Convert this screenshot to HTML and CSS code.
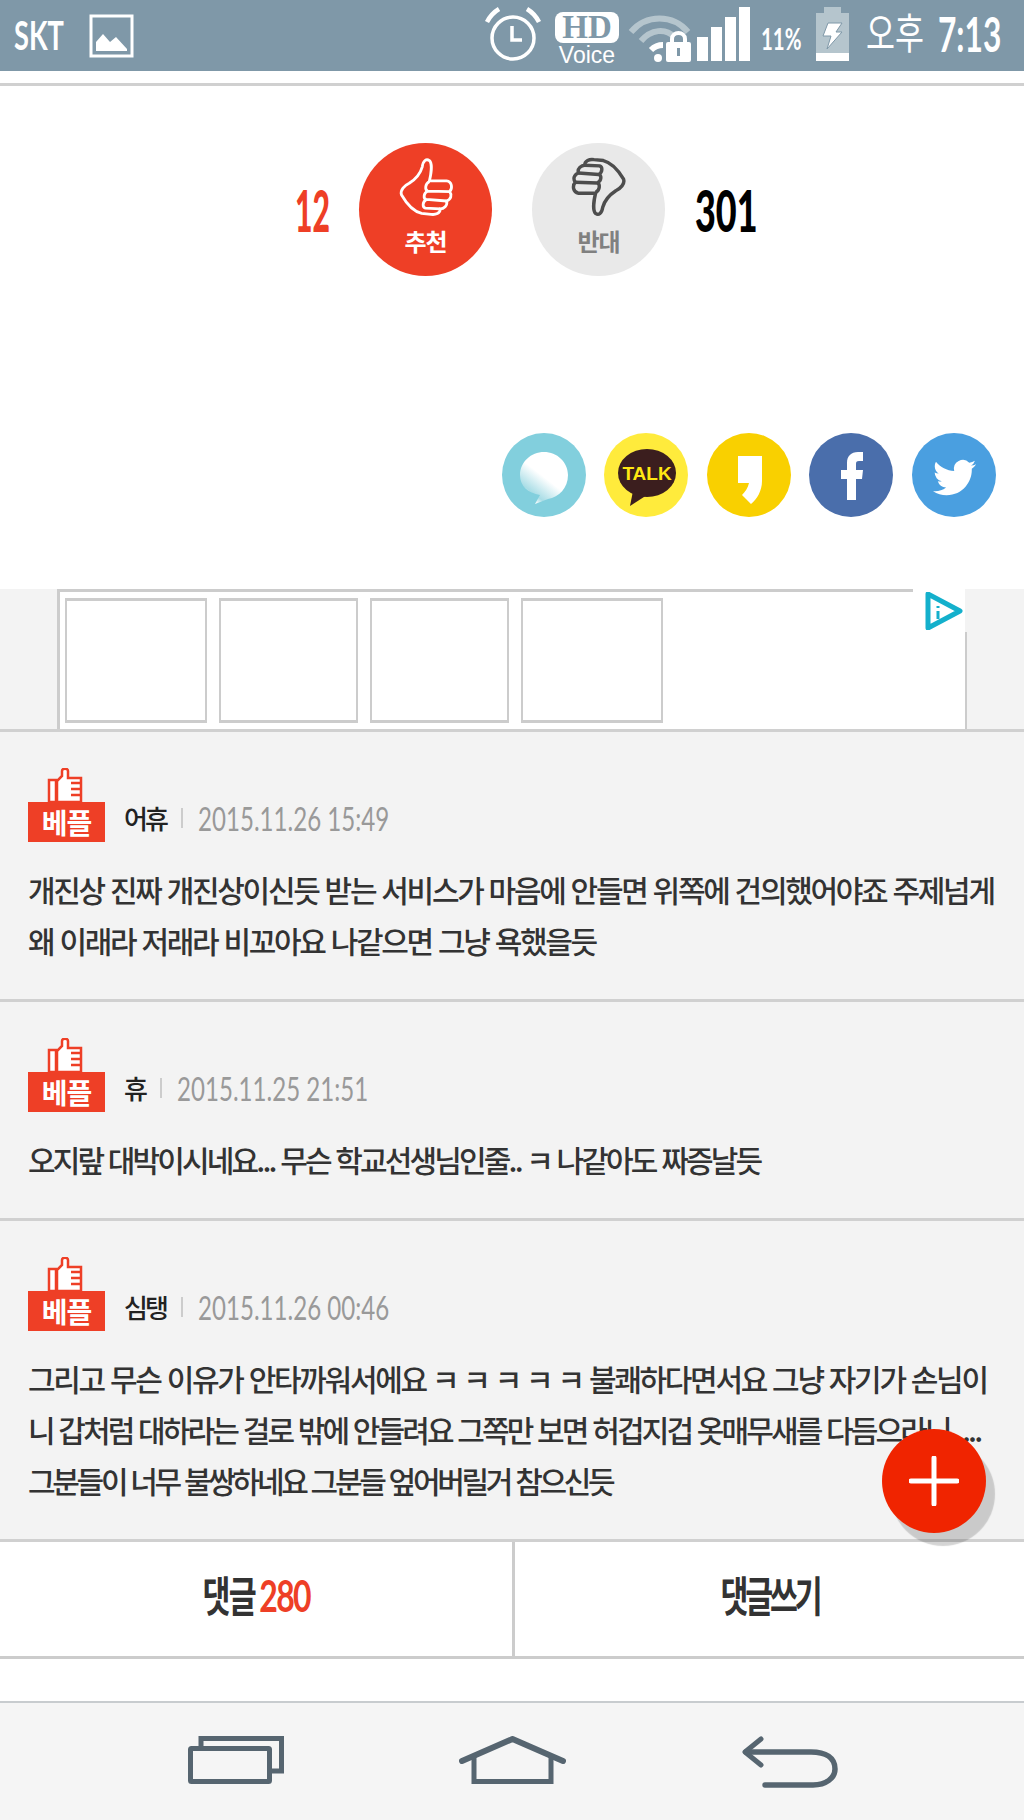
FILE: index.html
```html
<!DOCTYPE html>
<html lang="ko">
<head>
    <meta charset="UTF-8">
    <meta name="viewport" content="width=device-width, initial-scale=1.0">
    <title>댓글</title>
    <link rel="stylesheet" href="styles.css">
</head>
<body>
<div class="page">
    <!-- status bar -->
    <div class="status-bar">
        <div class="status-left">
            <span class="carrier"><span class="squeeze">SKT</span></span>
            <svg class="gallery-icon" width="45" height="44" viewBox="0 0 45 44">
                <rect x="2" y="2" width="41" height="40" fill="none" stroke="#fff" stroke-width="3"/>
                <path d="M7 37V28L14 20L21 28L27 23L38 35V37Z" fill="#fff"/>
            </svg>
        </div>
        <div class="status-right">
            <svg class="alarm-icon" width="58" height="54" viewBox="0 0 58 54">
                <circle cx="29" cy="31" r="21" fill="none" stroke="#fff" stroke-width="3.5"/>
                <path d="M28 19V33H38" fill="none" stroke="#fff" stroke-width="3.5"/>
                <path d="M3 15C6 9 10 5 15 2M55 15C52 9 48 5 43 2" fill="none" stroke="#fff" stroke-width="4.5"/>
            </svg>
            <div class="hd-voice">
                <span class="hd">HD</span>
                <span class="voice">Voice</span>
            </div>
            <svg class="wifi-icon" width="63" height="48" viewBox="0 0 63 48">
                <path d="M3 17C18 -1 45 -1 60 17" fill="none" stroke="#b5c5cd" stroke-width="6"/>
                <path d="M13 26C23 14 38 13 46 22" fill="none" stroke="#b5c5cd" stroke-width="6"/>
                <path d="M23 35C27 31 31 30 35 30" fill="none" stroke="#fff" stroke-width="6"/>
                <circle cx="30" cy="43" r="4" fill="#fff"/>
                <rect x="38" y="27" width="25" height="20" rx="2" fill="#fff"/>
                <path d="M44 28V24C44 16 57 16 57 24V28" fill="none" stroke="#fff" stroke-width="4"/>
                <rect x="49" y="33" width="3" height="8" fill="#7f98a8"/>
            </svg>
            <div class="signal">
                <span class="bar bar-1"></span>
                <span class="bar bar-2"></span>
                <span class="bar bar-3"></span>
                <span class="bar bar-4"></span>
            </div>
            <span class="percent"><span class="squeeze">11%</span></span>
            <svg class="battery-icon" width="33" height="54" viewBox="0 0 33 54">
                <rect x="8" y="0" width="17" height="6" fill="#b5c5cd"/>
                <rect x="0" y="6" width="33" height="40" fill="#b5c5cd"/>
                <rect x="0" y="46" width="33" height="8" fill="#fff"/>
                <path d="M12 16H26L20 25H26L11 42L15 29H7Z" fill="#fff" stroke="#7f98a8" stroke-width="1"/>
            </svg>
            <span class="ampm"><span class="squeeze">오후</span></span>
            <span class="clock"><span class="squeeze">7:13</span></span>
        </div>
    </div>

    <div class="top-panel">
        <!-- vote -->
        <div class="vote-row">
            <span class="vote-count count-up"><span class="squeeze">12</span></span>
            <div class="vote-btn vote-up">
                <svg width="56" height="60" viewBox="-6 -6 180 192">
                    <path d="M5 115C0 100 15 85 30 78C50 65 65 50 72 25C75 5 85 -2 95 5C105 15 100 50 95 70L150 70C168 72 170 95 160 105C168 115 165 130 150 135C155 150 140 160 130 160C130 175 115 180 100 178L70 175C50 170 25 150 5 115Z" fill="none" stroke="#fff" stroke-width="9"/>
                    <path d="M95 72C80 80 80 100 90 103L160 105M90 103C75 110 75 128 85 130L150 135M85 130C72 138 72 155 82 158L130 160" fill="none" stroke="#fff" stroke-width="9"/>
                </svg>
                <span class="vote-label">추천</span>
            </div>
            <div class="vote-btn vote-down">
                <svg width="56" height="60" viewBox="-6 -6 180 192">
                    <g transform="rotate(180 84 90)">
                        <path d="M5 115C0 100 15 85 30 78C50 65 65 50 72 25C75 5 85 -2 95 5C105 15 100 50 95 70L150 70C168 72 170 95 160 105C168 115 165 130 150 135C155 150 140 160 130 160C130 175 115 180 100 178L70 175C50 170 25 150 5 115Z" fill="none" stroke="#4d4d4d" stroke-width="11"/>
                        <path d="M95 72C80 80 80 100 90 103L160 105M90 103C75 110 75 128 85 130L150 135M85 130C72 138 72 155 82 158L130 160" fill="none" stroke="#4d4d4d" stroke-width="11"/>
                    </g>
                </svg>
                <span class="vote-label">반대</span>
            </div>
            <span class="vote-count count-down"><span class="squeeze">301</span></span>
        </div>

        <!-- share -->
        <div class="share-row">
            <svg width="84" height="84" viewBox="0 0 84 84">
                <defs>
                    <linearGradient id="bubbleFade" x1="0.7" y1="0.2" x2="0.2" y2="0.9">
                        <stop offset="0.4" stop-color="#fff"/>
                        <stop offset="0.85" stop-color="#a9dde6"/>
                        <stop offset="1" stop-color="#fff"/>
                    </linearGradient>
                </defs>
                <circle cx="42" cy="42" r="42" fill="#82cfdd"/>
                <path d="M42 19C55 19 66 29 66 42C66 55 57 64 46 66L33 71L38 62C26 60 18 53 18 42C18 29 29 19 42 19Z" fill="url(#bubbleFade)"/>
            </svg>
            <svg width="84" height="84" viewBox="0 0 84 84">
                <circle cx="42" cy="42" r="42" fill="#ffeb3c"/>
                <ellipse cx="43" cy="40" rx="29" ry="24" fill="#3b1e1e"/>
                <path d="M29 58L26 73L43 62Z" fill="#3b1e1e"/>
                <text x="43" y="47" class="talk-text">TALK</text>
            </svg>
            <svg width="84" height="84" viewBox="0 0 84 84">
                <circle cx="42" cy="42" r="42" fill="#f9d000"/>
                <path d="M31 23H55V48C55 58 50 66 44 71L35 62C38 59 41 55 42 50H31Z" fill="#fff"/>
            </svg>
            <svg width="84" height="84" viewBox="0 0 84 84">
                <circle cx="42" cy="42" r="42" fill="#4a6eab"/>
                <path d="M38 67V46H32V37H38V30C38 23 42 19 49 19H54V28H50C47.5 28 47 29 47 31V37H54L53 46H47V67Z" fill="#fff"/>
            </svg>
            <svg width="84" height="84" viewBox="0 0 84 84">
                <circle cx="42" cy="42" r="42" fill="#4a9fe0"/>
                <path transform="translate(21 23) scale(1.8)" d="M23.953 4.57a10 10 0 01-2.825.775 4.958 4.958 0 002.163-2.723c-.951.555-2.005.959-3.127 1.184a4.92 4.92 0 00-8.384 4.482C7.69 8.095 4.067 6.13 1.64 3.162a4.822 4.822 0 00-.666 2.475c0 1.71.87 3.213 2.188 4.096a4.904 4.904 0 01-2.228-.616v.06a4.923 4.923 0 003.946 4.827 4.996 4.996 0 01-2.212.085 4.936 4.936 0 004.604 3.417 9.867 9.867 0 01-6.102 2.105c-.39 0-.779-.023-1.17-.067a13.995 13.995 0 007.557 2.209c9.053 0 13.998-7.496 13.998-13.985 0-.21 0-.42-.015-.63A9.935 9.935 0 0024 4.59z" fill="#fff"/>
            </svg>
        </div>
    </div>

    <!-- ad slot -->
    <div class="ad-strip">
        <div class="ad-box">
            <div class="ad-cell cell-wide"></div>
            <div class="ad-cell"></div>
            <div class="ad-cell"></div>
            <div class="ad-cell cell-wide"></div>
            <div class="ad-mark">
                <svg width="39" height="38" viewBox="0 0 39 38">
                    <path d="M3 2L35 19L3 36Z" fill="none" stroke="#14b0cc" stroke-width="5" stroke-linejoin="round"/>
                    <path d="M13 14V16M13 19V27" stroke="#14b0cc" stroke-width="3"/>
                </svg>
            </div>
        </div>
    </div>

    <!-- comments -->
    <div class="comment">
        <div class="comment-meta">
            <div class="best-badge">
                <svg width="37" height="34" viewBox="0 0 37 34">
                    <path d="M2 12H9V34H2Z" fill="#fff" stroke="#ee3f26" stroke-width="2.5"/>
                    <path d="M10 34V13L15 8V3C15 0 21 0 21 3V10H34V34Z" fill="#fff" stroke="#ee3f26" stroke-width="2.5"/>
                    <path d="M24 15H34M24 21H34M24 27H34" stroke="#ee3f26" stroke-width="2.5"/>
                </svg>
                <span class="best-label">베플</span>
            </div>
            <span class="nick">어휴</span>
            <span class="meta-sep"></span>
            <span class="date"><span class="squeeze">2015.11.26 15:49</span></span>
        </div>
        <p class="comment-text">개진상 진짜 개진상이신듯 받는 서비스가 마음에 안들면 위쪽에 건의했어야죠 주제넘게<br>왜 이래라 저래라 비꼬아요 나같으면 그냥 욕했을듯</p>
    </div>
    <div class="comment">
        <div class="comment-meta">
            <div class="best-badge">
                <svg width="37" height="34" viewBox="0 0 37 34">
                    <path d="M2 12H9V34H2Z" fill="#fff" stroke="#ee3f26" stroke-width="2.5"/>
                    <path d="M10 34V13L15 8V3C15 0 21 0 21 3V10H34V34Z" fill="#fff" stroke="#ee3f26" stroke-width="2.5"/>
                    <path d="M24 15H34M24 21H34M24 27H34" stroke="#ee3f26" stroke-width="2.5"/>
                </svg>
                <span class="best-label">베플</span>
            </div>
            <span class="nick">휴</span>
            <span class="meta-sep"></span>
            <span class="date"><span class="squeeze">2015.11.25 21:51</span></span>
        </div>
        <p class="comment-text"><span class="tight">오지랖 대박이시네요... 무슨 학교선생님인줄.. ㅋ 나같아도 짜증날듯</span></p>
    </div>
    <div class="comment">
        <div class="comment-meta">
            <div class="best-badge">
                <svg width="37" height="34" viewBox="0 0 37 34">
                    <path d="M2 12H9V34H2Z" fill="#fff" stroke="#ee3f26" stroke-width="2.5"/>
                    <path d="M10 34V13L15 8V3C15 0 21 0 21 3V10H34V34Z" fill="#fff" stroke="#ee3f26" stroke-width="2.5"/>
                    <path d="M24 15H34M24 21H34M24 27H34" stroke="#ee3f26" stroke-width="2.5"/>
                </svg>
                <span class="best-label">베플</span>
            </div>
            <span class="nick">심탱</span>
            <span class="meta-sep"></span>
            <span class="date"><span class="squeeze">2015.11.26 00:46</span></span>
        </div>
        <p class="comment-text">그리고 무슨 이유가 안타까워서에요 ㅋ ㅋ ㅋ ㅋ ㅋ 불쾌하다면서요 그냥 자기가 손님이<br><span class="tight">니 갑처럼 대하라는 걸로 밖에 안들려요 그쪽만 보면 허겁지겁 옷매무새를 다듬으라니.....</span><br><span class="tighter">그분들이 너무 불쌍하네요 그분들 엎어버릴거 참으신듯</span></p>
    </div>

    <!-- bottom tabs -->
    <div class="tabs">
        <div class="tab tab-first"><span class="tab-label">댓글<span class="tab-count">280</span></span></div>
        <div class="tab"><span class="tab-label tab-write">댓글쓰기</span></div>
    </div>
    <div class="tabs-gap"></div>

    <!-- android nav -->
    <div class="nav-bar">
        <svg width="96" height="48" viewBox="0 0 96 48">
            <rect x="2.5" y="12.5" width="79" height="33" rx="1" fill="none" stroke="#566570" stroke-width="5"/>
            <path d="M13 10V2.5H93.5V35H84" fill="none" stroke="#566570" stroke-width="5"/>
        </svg>
        <svg width="107" height="48" viewBox="0 0 107 48">
            <path d="M3 25L53.5 3L104 25" fill="none" stroke="#566570" stroke-width="6" stroke-linecap="round" stroke-linejoin="round"/>
            <path d="M15 20V45.5H92V20" fill="none" stroke="#566570" stroke-width="5"/>
        </svg>
        <svg width="98" height="52" viewBox="0 0 98 52">
            <path d="M20 3L4 16L20 29" fill="none" stroke="#566570" stroke-width="5" stroke-linecap="round" stroke-linejoin="round"/>
            <path d="M5 16H70C85 16 94 22 94 33C94 42 85 49 72 49H24" fill="none" stroke="#566570" stroke-width="5.5" stroke-linecap="round"/>
        </svg>
    </div>

    <div class="fab">
        <svg width="50" height="50" viewBox="0 0 50 50">
            <path d="M25 2V48M2 25H48" stroke="#fff" stroke-width="5" stroke-linecap="round"/>
        </svg>
    </div>
</div>
</body>
</html>
```

FILE: styles.css
```css
html, body {
    margin: 0;
    padding: 0;
}
body {
    font-family: "Noto Sans CJK KR", "Noto Sans", sans-serif;
    background-color: #fff;
    color: #333;
}
.page {
    position: relative;
    width: 1024px;
    height: 1820px;
    overflow: hidden;
}
/* text in the reference is a tall narrow font, so latin runs get squeezed */
.squeeze {
    display: inline-block;
    white-space: nowrap;
    transform-origin: left center;
}

/* status bar */
.status-bar {
    height: 71px;
    margin-bottom: 12px;
    background-color: #7f98a8;
    display: flex;
    justify-content: space-between;
    color: #fff;
}
.status-left {
    display: flex;
    align-items: center;
    padding-left: 14px;
}
.carrier {
    width: 55px;
    margin-right: 20px;
    font-family: "Lato", sans-serif;
    font-size: 40px;
    font-weight: bold;
    line-height: 71px;
}
.carrier .squeeze {
    transform: scaleX(0.68);
}
.gallery-icon {
    display: block;
}
.status-right {
    display: flex;
    align-items: flex-start;
    padding-top: 7px;
    padding-right: 22px;
}
.hd-voice {
    width: 64px;
    margin-left: 13px;
    margin-top: 5px;
    display: flex;
    flex-direction: column;
    align-items: center;
}
.hd {
    width: 64px;
    height: 31px;
    border-radius: 8px;
    background-color: #fff;
    color: #7f98a8;
    font-family: "Liberation Serif", serif;
    font-size: 33px;
    font-weight: bold;
    line-height: 31px;
    text-align: center;
}
.voice {
    margin-top: 2px;
    font-family: "Liberation Sans", sans-serif;
    font-size: 23px;
    line-height: 20px;
}
.wifi-icon {
    margin-left: 9px;
    margin-top: 8px;
}
.signal {
    display: flex;
    align-items: flex-end;
    gap: 3px;
    height: 54px;
    margin-left: 6px;
}
.bar {
    width: 11px;
    background-color: #fff;
}
.bar-1 { height: 24px; }
.bar-2 { height: 34px; }
.bar-3 { height: 44px; }
.bar-4 { height: 54px; }
.percent {
    width: 40px;
    margin-left: 11px;
    margin-right: 2px;
    margin-top: 14px;
    font-family: "Lato", sans-serif;
    font-size: 31px;
    font-weight: bold;
    line-height: 34px;
}
.percent .squeeze {
    transform: scaleX(0.66);
}
.battery-icon {
    margin-left: 13px;
}
.ampm {
    width: 57px;
    margin-left: 17px;
    font-size: 42px;
    line-height: 48px;
}
.ampm .squeeze {
    transform: scaleX(0.75);
}
.clock {
    width: 64px;
    margin-left: 15px;
    font-family: "Lato", sans-serif;
    font-size: 48px;
    font-weight: bold;
    line-height: 54px;
}
.clock .squeeze {
    transform: scaleX(0.66);
}

/* vote + share */
.top-panel {
    border-top: 3px solid #d0d0d0;
    padding-top: 57px;
    padding-bottom: 72px;
}
.vote-row {
    display: flex;
    align-items: center;
    padding-left: 295px;
}
.vote-count {
    font-family: "Lato", sans-serif;
    font-size: 58px;
    font-weight: 900;
    line-height: 133px;
}
.count-up {
    width: 34px;
    margin-right: 30px;
    color: #ee3f26;
}
.count-up .squeeze {
    transform: scaleX(0.52);
}
.count-down {
    width: 60px;
    margin-left: 30px;
    color: #000;
}
.count-down .squeeze {
    transform: scaleX(0.62);
}
.vote-btn {
    width: 133px;
    height: 133px;
    box-sizing: border-box;
    padding-top: 14px;
    border-radius: 50%;
    display: flex;
    flex-direction: column;
    align-items: center;
}
.vote-up {
    background-color: #ee3f26;
    color: #fff;
    margin-right: 40px;
}
.vote-down {
    background-color: #e9e9e9;
    color: #808080;
}
.vote-label {
    margin-top: 11px;
    font-size: 24px;
    font-weight: bold;
    line-height: 26px;
    letter-spacing: -1px;
}
.share-row {
    display: flex;
    justify-content: flex-end;
    gap: 18.6px;
    margin-top: 157px;
    padding-right: 28px;
}
.share-row svg {
    display: block;
}
.talk-text {
    font-family: "Liberation Sans", sans-serif;
    font-size: 19px;
    font-weight: bold;
    fill: #ffe812;
    text-anchor: middle;
}

/* ad strip */
.ad-strip {
    height: 140px;
    background-color: #f3f3f3;
    border-bottom: 3px solid #d0d0d0;
}
.ad-box {
    position: relative;
    width: 910px;
    height: 140px;
    box-sizing: border-box;
    margin-left: 57px;
    padding: 6px 0 0 5px;
    background-color: #fff;
    border-top: 3px solid #ccc;
    border-left: 3px solid #ccc;
    border-right: 2px solid #ccc;
    display: flex;
    gap: 12px;
}
.ad-cell {
    width: 139px;
    height: 125px;
    box-sizing: border-box;
    border: solid #ccc;
    border-width: 3px 2px;
    background-color: #fff;
}
.cell-wide {
    width: 142px;
}
.ad-mark {
    position: absolute;
    top: -3px;
    right: -2px;
    width: 52px;
    height: 43px;
    background-color: #fff;
    border-right: 2px solid #f3f3f3;
}
.ad-mark svg {
    display: block;
    margin: 3px 0 0 12px;
}

/* comments */
.comment {
    background-color: #f3f3f3;
    border-bottom: 3px solid #d0d0d0;
    padding: 36px 20px 33px 28px;
}
.comment-meta {
    display: flex;
    align-items: flex-end;
    height: 74px;
}
.best-badge {
    width: 77px;
    margin-right: 19px;
    display: flex;
    flex-direction: column;
    align-items: center;
}
.best-badge svg {
    display: block;
    margin-left: -3px;
}
.best-label {
    width: 77px;
    height: 40px;
    background-color: #ee3f26;
    color: #fff;
    font-size: 28px;
    font-weight: bold;
    line-height: 40px;
    letter-spacing: -1px;
    text-align: center;
}
.nick {
    height: 48px;
    font-size: 26px;
    font-weight: 500;
    line-height: 48px;
    letter-spacing: -3px;
    color: #222;
}
.meta-sep {
    width: 2px;
    height: 20px;
    margin: 0 15px 14px 15px;
    background-color: #ccc;
}
.date {
    height: 48px;
    font-family: "Lato", sans-serif;
    font-size: 33px;
    line-height: 48px;
    color: #999;
}
.date .squeeze {
    transform: scaleX(0.73);
}
.comment-text {
    margin: 22px 0 0 0;
    font-size: 30px;
    font-weight: 500;
    line-height: 51px;
    letter-spacing: -2.3px;
    white-space: nowrap;
    color: #333;
}
.tight {
    letter-spacing: -2.85px;
}
.tighter {
    letter-spacing: -3.3px;
}

/* tabs */
.tabs {
    height: 114px;
    background-color: #fff;
    border-bottom: 3px solid #ccc;
    display: flex;
}
.tab {
    flex: 1;
    box-sizing: border-box;
    padding-bottom: 10px;
    display: flex;
    align-items: center;
    justify-content: center;
}
.tab-first {
    flex: none;
    width: 515px;
    border-right: 3px solid #ccc;
}
.tab-label {
    display: inline-block;
    font-size: 38px;
    font-weight: bold;
    line-height: 50px;
    white-space: nowrap;
    color: #333;
    transform: scaleX(0.8) scaleY(1.1);
    letter-spacing: -2px;
}
.tab-write {
    letter-spacing: -4px;
}
.tab-count {
    margin-left: 5px;
    color: #ee3f26;
    font-family: "Lato", sans-serif;
    font-size: 40px;
}
.tabs-gap {
    height: 42px;
    background-color: #fff;
}

/* nav bar */
.nav-bar {
    height: 117px;
    background-color: #f5f5f5;
    border-top: 2px solid #c8cccf;
    display: flex;
    align-items: flex-start;
    padding-top: 33px;
    padding-left: 188px;
    gap: 175px;
}

/* floating add button */
.fab {
    position: absolute;
    left: 882px;
    top: 1429px;
    width: 104px;
    height: 104px;
    border-radius: 50%;
    background-color: #f02400;
    box-shadow: 9px 13px 1px rgba(0, 0, 0, 0.17);
    display: flex;
    align-items: center;
    justify-content: center;
}
.fab svg {
    display: block;
}
```
